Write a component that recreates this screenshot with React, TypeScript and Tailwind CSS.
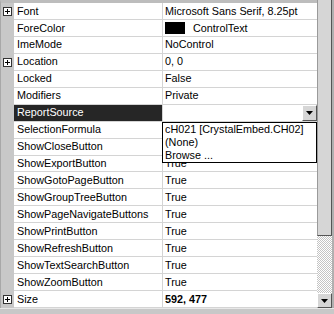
import React from 'react';

type Row = {
  name: string;
  value: string;
  expand?: boolean;
  swatch?: boolean;
  selected?: boolean;
  bold?: boolean;
};

// ShowCloseButton's value sits under the open list, so it is left blank
const rows: Row[] = [
  { name: 'Font', value: 'Microsoft Sans Serif, 8.25pt', expand: true },
  { name: 'ForeColor', value: 'ControlText', swatch: true },
  { name: 'ImeMode', value: 'NoControl' },
  { name: 'Location', value: '0, 0', expand: true },
  { name: 'Locked', value: 'False' },
  { name: 'Modifiers', value: 'Private' },
  { name: 'ReportSource', value: '', selected: true },
  { name: 'SelectionFormula', value: '' },
  { name: 'ShowCloseButton', value: '' },
  { name: 'ShowExportButton', value: 'True' },
  { name: 'ShowGotoPageButton', value: 'True' },
  { name: 'ShowGroupTreeButton', value: 'True' },
  { name: 'ShowPageNavigateButtons', value: 'True' },
  { name: 'ShowPrintButton', value: 'True' },
  { name: 'ShowRefreshButton', value: 'True' },
  { name: 'ShowTextSearchButton', value: 'True' },
  { name: 'ShowZoomButton', value: 'True' },
  { name: 'Size', value: '592, 477', expand: true, bold: true },
];

const DownArrow = () => (
  <svg width="7" height="4" viewBox="0 0 7 4">
    <path d="M0 0h7L3.5 4z" fill="#000" />
  </svg>
);

const PlusBox = () => (
  <div className="w-[9px] h-[9px] border border-[#333] bg-white flex items-center justify-center relative">
    <div className="absolute w-[5px] h-px bg-black" />
    <div className="absolute w-px h-[5px] bg-black" />
  </div>
);

export default function App() {
  return (
    <div className="w-[334px] h-[314px] bg-[#c8c8c8] flex flex-col font-['Liberation_Sans',Arial,sans-serif] text-[10.8px] text-black">
      <div className="flex h-[308px]">
        {/* grid */}
        <div className="relative w-[317px] flex flex-col border-t-[3px] border-[#bdbdbd] border-l border-l-[#a8a8a8]">
          {rows.map(r => (
            <div key={r.name} className="flex h-[17px]">
              <div className="w-[13px] bg-[#c8c8c8] flex items-center justify-center">
                {r.expand && <PlusBox />}
              </div>
              <div className={`w-[149px] border-b border-r border-[#d4d4d4] pl-[3px] flex items-center leading-none ${r.selected ? 'bg-[#262626] text-white' : 'bg-white'}`}>
                {r.name}
              </div>
              <div className={`flex-1 border-b border-[#d4d4d4] bg-white pl-[2px] flex items-center leading-none ${r.bold ? 'font-bold' : ''}`}>
                {r.swatch && <div className="w-[20px] h-[12px] bg-black mr-[8px]" />}
                <span>{r.value}</span>
                {r.selected && (
                  <div className="ml-auto w-[15px] h-[16px] bg-[#d6d6d6] border border-t-white border-l-white border-r-[#555] border-b-[#555] flex items-center justify-center">
                    <DownArrow />
                  </div>
                )}
              </div>
            </div>
          ))}
          {/* dropdown list */}
          <div className="absolute left-[161px] top-[119px] w-[155px] h-[41px] bg-white border border-black pl-[2px] leading-[13px]">
            <div>cH021 [CrystalEmbed.CH02]</div>
            <div>(None)</div>
            <div>Browse ...</div>
          </div>
        </div>
        {/* scrollbar */}
        <div className="w-[15px] flex flex-col">
          <div className="h-[236px] bg-[#d6d6d6] border-l border-l-[#9a9a9a] border-r border-r-[#555] border-b border-b-[#555]" />
          <div className="flex-1 bg-[repeating-conic-gradient(#c4c4c4_0_25%,#ffffff_0_50%)] bg-[length:2px_2px]" />
          <div className="h-[15px] bg-[#d6d6d6] border border-t-white border-l-white border-r-[#555] border-b-[#555] flex items-center justify-center">
            <DownArrow />
          </div>
        </div>
        <div className="w-[2px] bg-[#b0b0b0]" />
      </div>
      <div className="flex-1 border-t border-[#e8e8e8] bg-[#c8c8c8]" />
    </div>
  );
}
